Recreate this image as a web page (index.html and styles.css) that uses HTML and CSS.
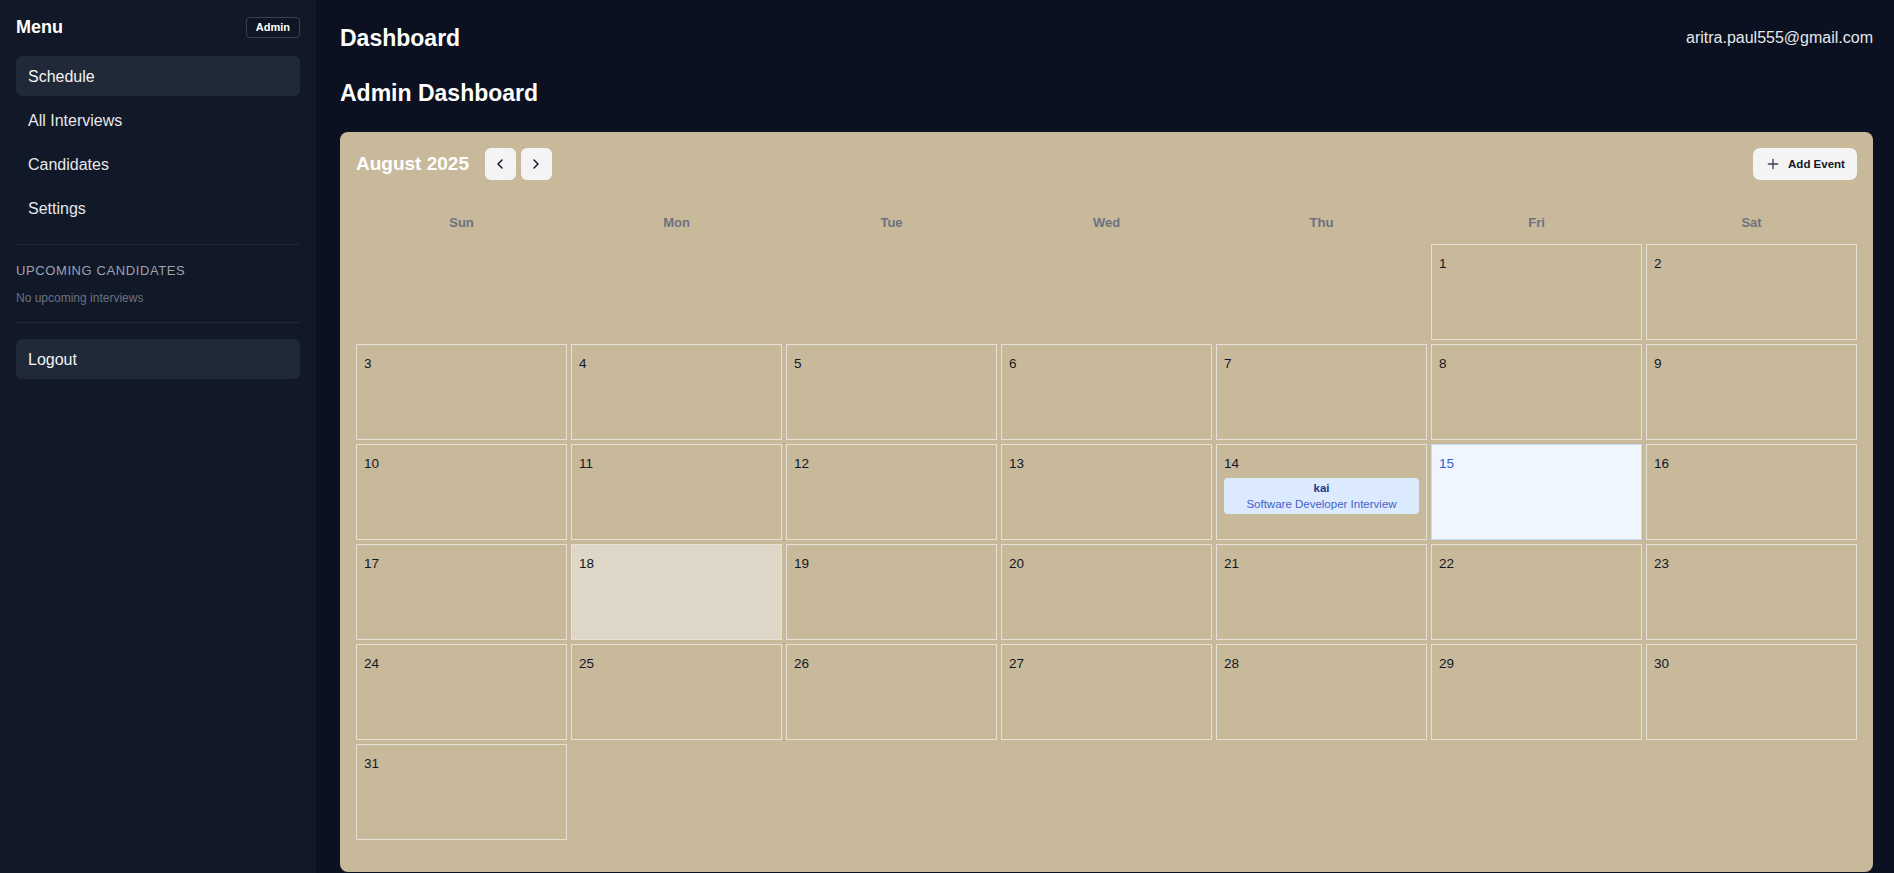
FILE: index.html
```html
<!DOCTYPE html>
<html lang="en">
<head>
<meta charset="utf-8">
<title>Dashboard</title>
<link rel="stylesheet" href="styles.css">
</head>
<body>
<div class="layout">
  <aside class="sidebar">
    <div class="menu-row">
      <span class="menu-title">Menu</span>
      <span class="badge">Admin</span>
    </div>
    <nav class="nav">
      <a class="nav-item active">Schedule</a>
      <a class="nav-item">All Interviews</a>
      <a class="nav-item">Candidates</a>
      <a class="nav-item">Settings</a>
    </nav>
    <div class="divider"></div>
    <div class="upcoming">
      <div class="upcoming-title">UPCOMING CANDIDATES</div>
      <div class="upcoming-empty">No upcoming interviews</div>
    </div>
    <div class="divider"></div>
    <a class="nav-item logout">Logout</a>
  </aside>

  <main class="main">
    <header class="topbar">
      <h1 class="page-title">Dashboard</h1>
      <span class="email">aritra.paul555@gmail.com</span>
    </header>
    <h2 class="section-title">Admin Dashboard</h2>

    <section class="calendar">
      <div class="cal-head">
        <div class="cal-left">
          <span class="month">August 2025</span>
          <div class="nav-btns">
            <button class="icon-btn" aria-label="Previous">
              <svg width="16" height="16" viewBox="0 0 24 24" fill="none" stroke="#111827" stroke-width="2.2" stroke-linecap="round" stroke-linejoin="round"><path d="M15 18l-6-6 6-6"/></svg>
            </button>
            <button class="icon-btn" aria-label="Next">
              <svg width="16" height="16" viewBox="0 0 24 24" fill="none" stroke="#111827" stroke-width="2.2" stroke-linecap="round" stroke-linejoin="round"><path d="M9 18l6-6-6-6"/></svg>
            </button>
          </div>
        </div>
        <button class="add-btn">
          <svg width="16" height="16" viewBox="0 0 24 24" fill="none" stroke="#374151" stroke-width="2" stroke-linecap="round"><path d="M12 5v14M5 12h14"/></svg>
          <span>Add Event</span>
        </button>
      </div>

      <div class="weekdays">
        <div>Sun</div><div>Mon</div><div>Tue</div><div>Wed</div><div>Thu</div><div>Fri</div><div>Sat</div>
      </div>

      <div class="grid">
        <div class="blank"></div><div class="blank"></div><div class="blank"></div><div class="blank"></div><div class="blank"></div>
        <div class="cell"><span class="num">1</span></div>
        <div class="cell"><span class="num">2</span></div>
        <div class="cell"><span class="num">3</span></div>
        <div class="cell"><span class="num">4</span></div>
        <div class="cell"><span class="num">5</span></div>
        <div class="cell"><span class="num">6</span></div>
        <div class="cell"><span class="num">7</span></div>
        <div class="cell"><span class="num">8</span></div>
        <div class="cell"><span class="num">9</span></div>
        <div class="cell"><span class="num">10</span></div>
        <div class="cell"><span class="num">11</span></div>
        <div class="cell"><span class="num">12</span></div>
        <div class="cell"><span class="num">13</span></div>
        <div class="cell"><span class="num">14</span>
          <div class="event"><div class="event-name">kai</div><div class="event-title">Software Developer Interview</div></div>
        </div>
        <div class="cell today"><span class="num">15</span></div>
        <div class="cell"><span class="num">16</span></div>
        <div class="cell"><span class="num">17</span></div>
        <div class="cell hover"><span class="num">18</span></div>
        <div class="cell"><span class="num">19</span></div>
        <div class="cell"><span class="num">20</span></div>
        <div class="cell"><span class="num">21</span></div>
        <div class="cell"><span class="num">22</span></div>
        <div class="cell"><span class="num">23</span></div>
        <div class="cell"><span class="num">24</span></div>
        <div class="cell"><span class="num">25</span></div>
        <div class="cell"><span class="num">26</span></div>
        <div class="cell"><span class="num">27</span></div>
        <div class="cell"><span class="num">28</span></div>
        <div class="cell"><span class="num">29</span></div>
        <div class="cell"><span class="num">30</span></div>
        <div class="cell"><span class="num">31</span></div>
      </div>
    </section>
  </main>
</div>
</body>
</html>
```

FILE: styles.css
```css
* { box-sizing: border-box; }

html, body {
  margin: 0;
  padding: 0;
  height: 100%;
  overflow: hidden;
  background: #0b1120;
  font-family: "Liberation Sans", Arial, sans-serif;
}

.layout {
  display: flex;
  height: 873px;
}

/* Sidebar */
.sidebar {
  width: 316px;
  flex: 0 0 316px;
  background: #111827;
  padding: 17px 16px 16px;
  display: flex;
  flex-direction: column;
}

.menu-row {
  display: flex;
  justify-content: space-between;
  align-items: center;
  height: 20px;
}

.menu-title {
  color: #ffffff;
  font-size: 18px;
  font-weight: 700;
}

.badge {
  height: 21px;
  line-height: 19px;
  padding: 0 9px;
  border: 1px solid #374151;
  border-radius: 4px;
  color: #ffffff;
  font-size: 11px;
  font-weight: 700;
  background: #0f1523;
}

.nav {
  margin-top: 19px;
  display: flex;
  flex-direction: column;
  gap: 4px;
}

.nav-item {
  display: flex;
  align-items: center;
  height: 40px;
  padding-left: 12px;
  padding-top: 1px;
  border-radius: 6px;
  color: #e5e7eb;
  font-size: 16px;
}

.nav-item.active {
  background: #1f2937;
  color: #f3f4f6;
}

.divider {
  height: 1px;
  background: #1f2937;
  margin-top: 16px;
}

.upcoming {
  padding-top: 17px;
}

.upcoming-title {
  color: #9ca3af;
  font-size: 13px;
  line-height: 18px;
  letter-spacing: 0.6px;
}

.upcoming-empty {
  margin-top: 10px;
  color: #6b7280;
  font-size: 12px;
  line-height: 16px;
}

.nav-item.logout {
  margin-top: 16px;
  background: #1f2937;
  color: #f3f4f6;
}

/* Main */
.main {
  flex: 1;
  padding: 0 21px 0 24px;
  display: flex;
  flex-direction: column;
  min-width: 0;
}

.topbar {
  height: 74px;
  display: flex;
  align-items: center;
  justify-content: space-between;
  padding-top: 2px;
}

.page-title {
  margin: 0;
  color: #ffffff;
  font-size: 23px;
  font-weight: 700;
  line-height: 28px;
}

.email {
  color: #e5e7eb;
  font-size: 16px;
}

.section-title {
  margin: 5px 0 25px;
  color: #ffffff;
  font-size: 23px;
  font-weight: 700;
  line-height: 28px;
}

/* Calendar */
.calendar {
  background: #c8b99b;
  border-radius: 8px;
  padding: 16px 16px 32px;
}

.cal-head {
  display: flex;
  justify-content: space-between;
  align-items: center;
  height: 32px;
}

.cal-left {
  display: flex;
  align-items: center;
  gap: 16px;
}

.month {
  color: #ffffff;
  font-size: 19px;
  font-weight: 700;
}

.nav-btns {
  display: flex;
  gap: 5px;
}

.icon-btn {
  width: 31px;
  height: 32px;
  border: none;
  border-radius: 6px;
  background: #f4f4f4;
  display: flex;
  align-items: center;
  justify-content: center;
  padding: 0;
}

.add-btn {
  height: 32px;
  width: 104px;
  border: none;
  border-radius: 7px;
  background: #f4f4f4;
  display: flex;
  align-items: center;
  justify-content: center;
  gap: 7px;
  padding: 0 10px;
  color: #111827;
  font-family: "Liberation Sans", Arial, sans-serif;
  font-size: 11.5px;
  font-weight: 700;
}

.weekdays {
  margin-top: 24px;
  display: grid;
  grid-template-columns: repeat(7, 1fr);
  gap: 4px;
}

.weekdays div {
  text-align: center;
  padding: 9px 0 7px;
  line-height: 20px;
  color: #6b7280;
  font-size: 13px;
  font-weight: 700;
}

.grid {
  margin-top: 4px;
  display: grid;
  grid-template-columns: repeat(7, 1fr);
  grid-auto-rows: 96px;
  gap: 4px;
}

.cell {
  border: 1px solid #e6e1d6;
  padding: 9px 7px 7px;
  display: flex;
  flex-direction: column;
  gap: 4px;
}

.num {
  color: #111827;
  font-size: 13.5px;
  line-height: 20px;
}

.cell.today {
  background: #eff6ff;
  border-color: #bfdbfe;
}

.cell.today .num {
  color: #2f5fd6;
}

.cell.hover {
  background: #ded6c6;
}

.event {
  background: #dbeafe;
  border-radius: 4px;
  padding: 2px 4px;
  text-align: center;
  font-size: 11.5px;
  line-height: 16px;
}

.event-name {
  color: #1e3a8a;
  font-weight: 700;
}

.event-title {
  color: #4562c9;
}
```
